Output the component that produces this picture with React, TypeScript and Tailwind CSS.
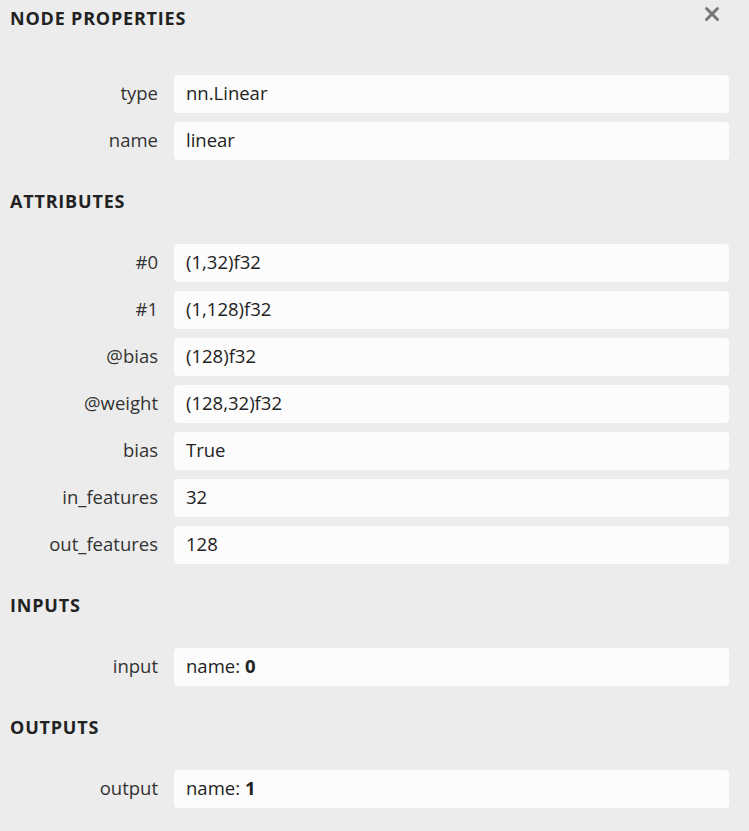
import { X } from 'lucide-react'

type Row = { label: string; value: string; bold?: string }

const sections: { title: string; rows: Row[] }[] = [
  {
    title: 'NODE PROPERTIES',
    rows: [
      { label: 'type', value: 'nn.Linear' },
      { label: 'name', value: 'linear' },
    ],
  },
  {
    title: 'ATTRIBUTES',
    rows: [
      { label: '#0', value: '(1,32)f32' },
      { label: '#1', value: '(1,128)f32' },
      { label: '@bias', value: '(128)f32' },
      { label: '@weight', value: '(128,32)f32' },
      { label: 'bias', value: 'True' },
      { label: 'in_features', value: '32' },
      { label: 'out_features', value: '128' },
    ],
  },
  {
    title: 'INPUTS',
    rows: [{ label: 'input', value: 'name:', bold: '0' }],
  },
  {
    title: 'OUTPUTS',
    rows: [{ label: 'output', value: 'name:', bold: '1' }],
  },
]

function App() {
  return (
    <div
      className="w-[749px] h-[831px] bg-[#ececec] text-[#222] relative overflow-hidden"
      style={{ fontFamily: '"Open Sans", "Noto Sans", sans-serif' }}
    >
      <button className="absolute right-[26px] top-[3px] text-[#777]">
        <X size={22} strokeWidth={3.2} />
      </button>

      {sections.map((section, i) => (
        <div key={section.title}>
          <div
            className={`h-[22px] flex items-center pl-[10px] text-[18px] font-bold tracking-[0.8px] text-[#222] ${
              i === 0 ? 'mt-[7px] mb-[46px]' : 'mt-[30px] mb-[32px]'
            }`}
          >
            {section.title}
          </div>
          <div className="flex flex-col gap-[9px]">
            {section.rows.map((row) => (
              <div key={row.label} className="flex items-center">
                <div className="w-[158px] pb-[3px] text-right text-[18.5px] text-[#333] whitespace-nowrap">{row.label}</div>
                <div className="ml-[16px] w-[555px] h-[38px] rounded-[4px] bg-[#fcfcfc] flex items-center gap-[5px] pl-[12px] pb-[3px] text-[18.5px] text-[#222]">
                  <span>{row.value}</span>
                  {row.bold && <span className="font-bold">{row.bold}</span>}
                </div>
              </div>
            ))}
          </div>
        </div>
      ))}
    </div>
  )
}

export default App
